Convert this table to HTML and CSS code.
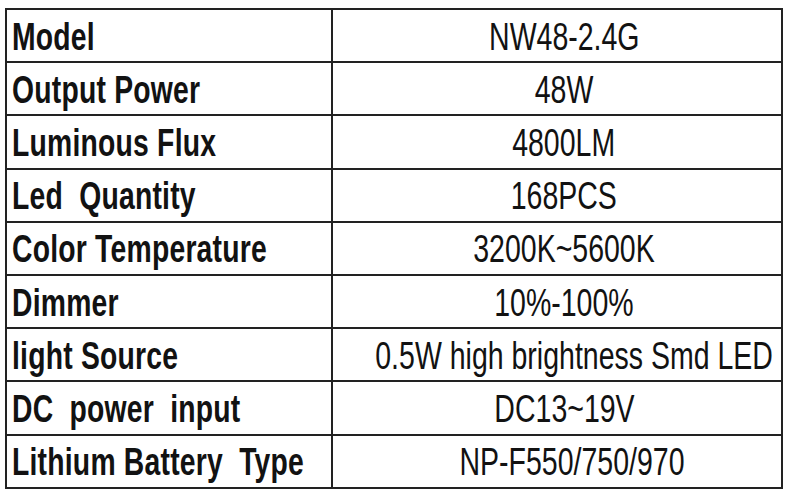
FILE: index.html
```html
<!DOCTYPE html>
<html lang="en">
<head>
<meta charset="utf-8">
<title>Specifications</title>
<link rel="stylesheet" href="styles.css">
</head>
<body>
<div class="spec">
  <div class="row"><div class="label"><span>Model</span></div><div class="value"><span>NW48-2.4G</span></div></div>
  <div class="row"><div class="label"><span>Output Power</span></div><div class="value"><span>48W</span></div></div>
  <div class="row"><div class="label"><span>Luminous Flux</span></div><div class="value"><span>4800LM</span></div></div>
  <div class="row"><div class="label"><span>Led  Quantity</span></div><div class="value"><span>168PCS</span></div></div>
  <div class="row"><div class="label"><span>Color Temperature</span></div><div class="value"><span>3200K~5600K</span></div></div>
  <div class="row"><div class="label"><span>Dimmer</span></div><div class="value"><span>10%-100%</span></div></div>
  <div class="row"><div class="label"><span>light Source</span></div><div class="value value-wide"><span>0.5W high brightness Smd LED</span></div></div>
  <div class="row"><div class="label"><span>DC  power  input</span></div><div class="value"><span>DC13~19V</span></div></div>
  <div class="row"><div class="label"><span>Lithium Battery  Type</span></div><div class="value value-shift"><span>NP-F550/750/970</span></div></div>
</div>
</body>
</html>
```
FILE: styles.css
```css
html, body {
  margin: 0;
  padding: 0;
  background: #ffffff;
}

body {
  font-family: "Liberation Sans", Arial, sans-serif;
  color: #121212;
}

.spec {
  margin: 8px 0 0 5px;
  width: 778px;
  box-sizing: border-box;
  border: 2px solid #222222;
  display: flex;
  flex-direction: column;
}

.row {
  display: flex;
  height: 51.2px;
  border-bottom: 2px solid #222222;
}

.row:last-child {
  border-bottom: none;
}

.label {
  width: 326px;
  flex: none;
  border-right: 2px solid #222222;
  display: flex;
  align-items: center;
  padding: 3px 0 0 5px;
  box-sizing: border-box;
  min-width: 0;
}

.label span {
  display: inline-block;
  font-size: 38px;
  font-weight: bold;
  white-space: pre;
  transform: scaleX(0.745);
  transform-origin: left center;
  letter-spacing: 0.3px;
}

.value {
  flex: 1;
  min-width: 0;
  display: flex;
  align-items: center;
  justify-content: center;
  padding: 3px 0 0 14px;
  box-sizing: border-box;
}

.value-wide {
  padding-left: 34px;
}

.value-shift {
  padding-left: 30px;
}

.value span {
  display: inline-block;
  flex: none;
  font-size: 38px;
  white-space: pre;
  transform: scaleX(0.75);
  transform-origin: center center;
}
```
